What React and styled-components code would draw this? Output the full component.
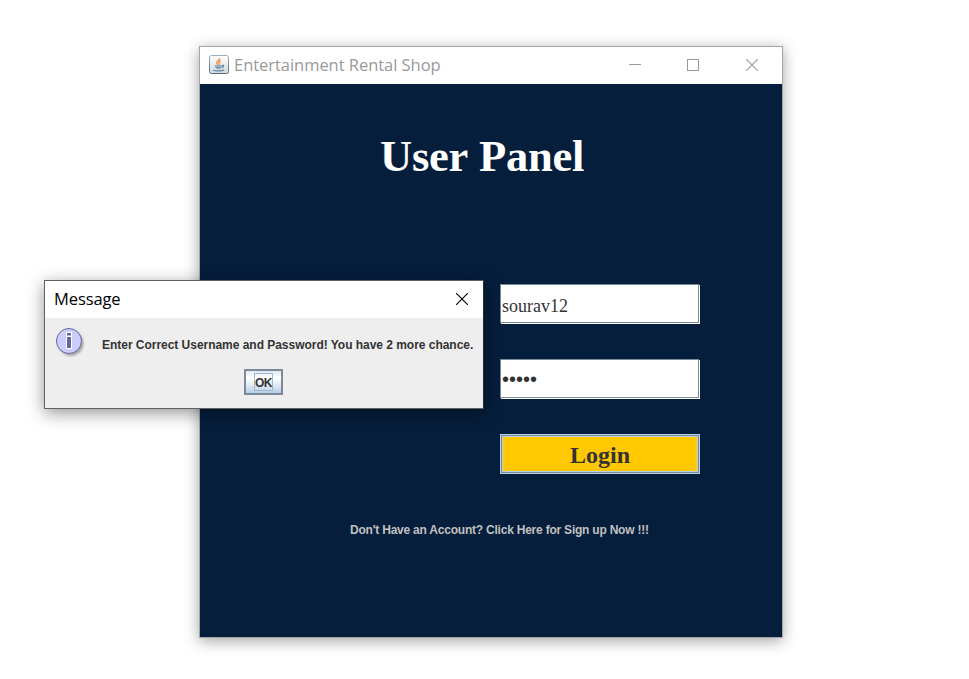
import React from "react";
import styled, { createGlobalStyle } from "styled-components";

const GlobalStyle = createGlobalStyle`
  * { box-sizing: border-box; }
  html, body { margin: 0; background: #fff; }
  body { overflow: hidden; }
`;

const Desktop = styled.main`
  position: relative;
  width: 969px;
  height: 679px;
  padding: 46px 0 0 199px;
  background: #fff;
  overflow: hidden;
`;

const Frame = styled.section`
  width: 584px;
  height: 592px;
  display: flex;
  flex-direction: column;
  border: 1px solid #a3a5a8;
  box-shadow: 0 3px 14px rgba(0, 0, 0, 0.36);
`;

const TitleBar = styled.header`
  height: 37px;
  flex: none;
  display: flex;
  align-items: center;
  background: #fff;
  padding: 0 ${(p) => p.$right}px 1px 9px;
  color: ${(p) => p.$color};
`;

const Title = styled.span`
  font: 16.5px/22px "Open Sans", "Noto Sans", sans-serif;
  letter-spacing: ${(p) => p.$spacing}px;
  white-space: nowrap;
  margin-left: ${(p) => p.$left || 0}px;
  flex: 1;
`;

const WindowControls = styled.div`
  display: flex;
  gap: 46px;
  svg { display: block; }
  svg:last-child { margin-left: 1px; }
`;

const Panel = styled.div`
  flex: 1;
  display: flex;
  flex-direction: column;
  background: #051e3c;
`;

const Heading = styled.h1`
  margin: 45px 0 0 180px;
  font: bold 44.5px/54px "Liberation Serif", serif;
  letter-spacing: -0.25px;
  word-spacing: 1px;
  color: #fff;
  white-space: nowrap;
`;

const Form = styled.form`
  display: flex;
  flex-direction: column;
  gap: 35px;
  margin: 101px 0 0 300px;
`;

const Field = styled.input`
  display: block;
  width: 199px;
  height: 39px;
  margin: 0 0 1px;
  padding: 5px 1px 0;
  border: 1px solid #7a8a99;
  border-radius: 0;
  outline: none;
  background: #fff;
  box-shadow: 1px 1px 0 #fff;
  color: #333;
  font: 18px/22px "Liberation Serif", serif;
`;

const PasswordField = styled(Field)`
  padding-top: 2px;
  font: 20px/22px "Liberation Sans", sans-serif;
`;

const LoginButton = styled.button`
  width: 200px;
  height: 40px;
  padding: 2px 0 0;
  border: 1px solid #b8cfe5;
  border-radius: 0;
  background: #ffc800;
  box-shadow: inset 0 0 0 1px #7a8a99, inset 0 0 0 2px #b8cfe5;
  color: #333;
  font: bold 24px/30px "Liberation Serif", serif;
`;

const SignupLink = styled.p`
  margin: 48px 0 0 150px;
  font: bold 12px/16px "Liberation Sans", sans-serif;
  letter-spacing: -0.22px;
  color: #c0c0c0;
  white-space: nowrap;
`;

const Dialog = styled.section`
  position: absolute;
  left: 44px;
  top: 280px;
  width: 440px;
  height: 129px;
  border: 1px solid #5f6062;
  border-right-color: #242b35;
  background: #eee;
  box-shadow: 0 4px 16px rgba(0, 0, 0, 0.42);
`;

const MessageRow = styled.div`
  display: flex;
  height: 51px;
  padding: 8px 0 0 10px;
  svg { flex: none; }
`;

const Message = styled.p`
  margin: 11px 0 0 15px;
  font: bold 12px/16px "Liberation Sans", sans-serif;
  letter-spacing: -0.03px;
  color: #333;
  white-space: nowrap;
`;

const OkButton = styled.button`
  display: flex;
  align-items: center;
  justify-content: center;
  width: 39px;
  height: 26px;
  margin: 0 0 0 199px;
  padding: 0;
  border: 2px solid #7a8a99;
  border-radius: 0;
  background: linear-gradient(#dde8f3 0%, #fff 30%, #fff 35%, #b8cfe5 100%);
`;

const FocusLabel = styled.span`
  display: flex;
  align-items: center;
  justify-content: center;
  width: 19px;
  height: 18px;
  padding-top: 2px;
  border: 1px solid #a3b8cc;
  font: bold 12px/14px "Liberation Sans", sans-serif;
  letter-spacing: -0.4px;
  color: #333;
`;

const JavaIcon = () => (
  <svg width="20" height="20" viewBox="0 0 20 20">
    <defs>
      <linearGradient id="tile" x1="0" y1="0" x2="0" y2="1">
        <stop offset="0" stopColor="#fff" />
        <stop offset="1" stopColor="#d4d8dc" />
      </linearGradient>
      <linearGradient id="rim" x1="0" y1="0" x2="0" y2="1">
        <stop offset="0" stopColor="#9aadbd" />
        <stop offset="1" stopColor="#506b80" />
      </linearGradient>
    </defs>
    <rect x=".5" y=".5" width="19" height="18" rx="2" fill="url(#tile)" stroke="url(#rim)" />
    <path d="M10.7 3c.6 2-3 2.6-2.9 4.6 0 1 .8 1.4 1.1 2.2M11.8 5.7c-2.2 1-2.2 1.6-1.5 2.4.5.6.2 1.2-.4 1.8" fill="none" stroke="#ed9a59" strokeWidth="1.5" />
    <path d="M5.6 10.3h7.2l-.7 2.4-1 1H7.6l-1-1z" fill="#7195ad" />
    <path d="M6.6 11.5h5.6" stroke="#bccbd6" strokeWidth=".6" />
    <path d="M12.8 10.4c2.5-.6 2.4 1.7-.2 2.2M4 15c2.5 1.3 8.7 1.2 11-.1" fill="none" stroke="#6288a3" strokeWidth="1.3" />
  </svg>
);

const InfoIcon = () => (
  <svg width="32" height="32" viewBox="0 0 32 32">
    <defs>
      <filter id="blur" x="-20%" y="-20%" width="140%" height="140%">
        <feGaussianBlur stdDeviation="1.1" />
      </filter>
    </defs>
    <circle cx="16" cy="17.3" r="12.6" fill="#777" opacity=".6" filter="url(#blur)" />
    <circle cx="14" cy="15" r="12.5" fill="#ccf" stroke="#669" />
    <path d="M11 6h6v17h-6z" fill="#fff" />
    <path d="M12 7h4v2.5h-4zM12 11h4v11h-4z" fill="#669" />
  </svg>
);

const CloseGlyph = () => (
  <svg width="12" height="12" viewBox="0 0 12 12">
    <path d="M0 0l12 12M12 0L0 12" stroke="currentColor" fill="none" strokeWidth="1.1" />
  </svg>
);

export default function App() {
  return (
    <>
      <GlobalStyle />
      <Desktop>
        <Frame>
          <TitleBar $color="#999" $right={24}>
            <JavaIcon />
            <Title $spacing={-0.04} $left={5}>Entertainment Rental Shop</Title>
            <WindowControls>
              <svg width="12" height="12" viewBox="0 0 12 12">
                <path d="M0 5.5h12" stroke="currentColor" />
              </svg>
              <svg width="12" height="12" viewBox="0 0 12 12">
                <rect x=".5" y=".5" width="11" height="11" fill="none" stroke="currentColor" />
              </svg>
              <CloseGlyph />
            </WindowControls>
          </TitleBar>
          <Panel>
            <Heading>User Panel</Heading>
            <Form onSubmit={(e) => e.preventDefault()}>
              <Field type="text" aria-label="Username" defaultValue="sourav12" spellCheck={false} />
              <PasswordField type="text" aria-label="Password" defaultValue="•••••" />
              <LoginButton type="button">Login</LoginButton>
            </Form>
            <SignupLink>Don't Have an Account? Click Here for Sign up Now !!!</SignupLink>
          </Panel>
        </Frame>
        <Dialog role="dialog" aria-label="Message">
          <TitleBar $color="#000" $right={15}>
            <Title $spacing={-0.1}>Message</Title>
            <CloseGlyph />
          </TitleBar>
          <MessageRow>
            <InfoIcon />
            <Message>Enter Correct Username and Password! You have 2 more chance.</Message>
          </MessageRow>
          <OkButton type="button">
            <FocusLabel>OK</FocusLabel>
          </OkButton>
        </Dialog>
      </Desktop>
    </>
  );
}
